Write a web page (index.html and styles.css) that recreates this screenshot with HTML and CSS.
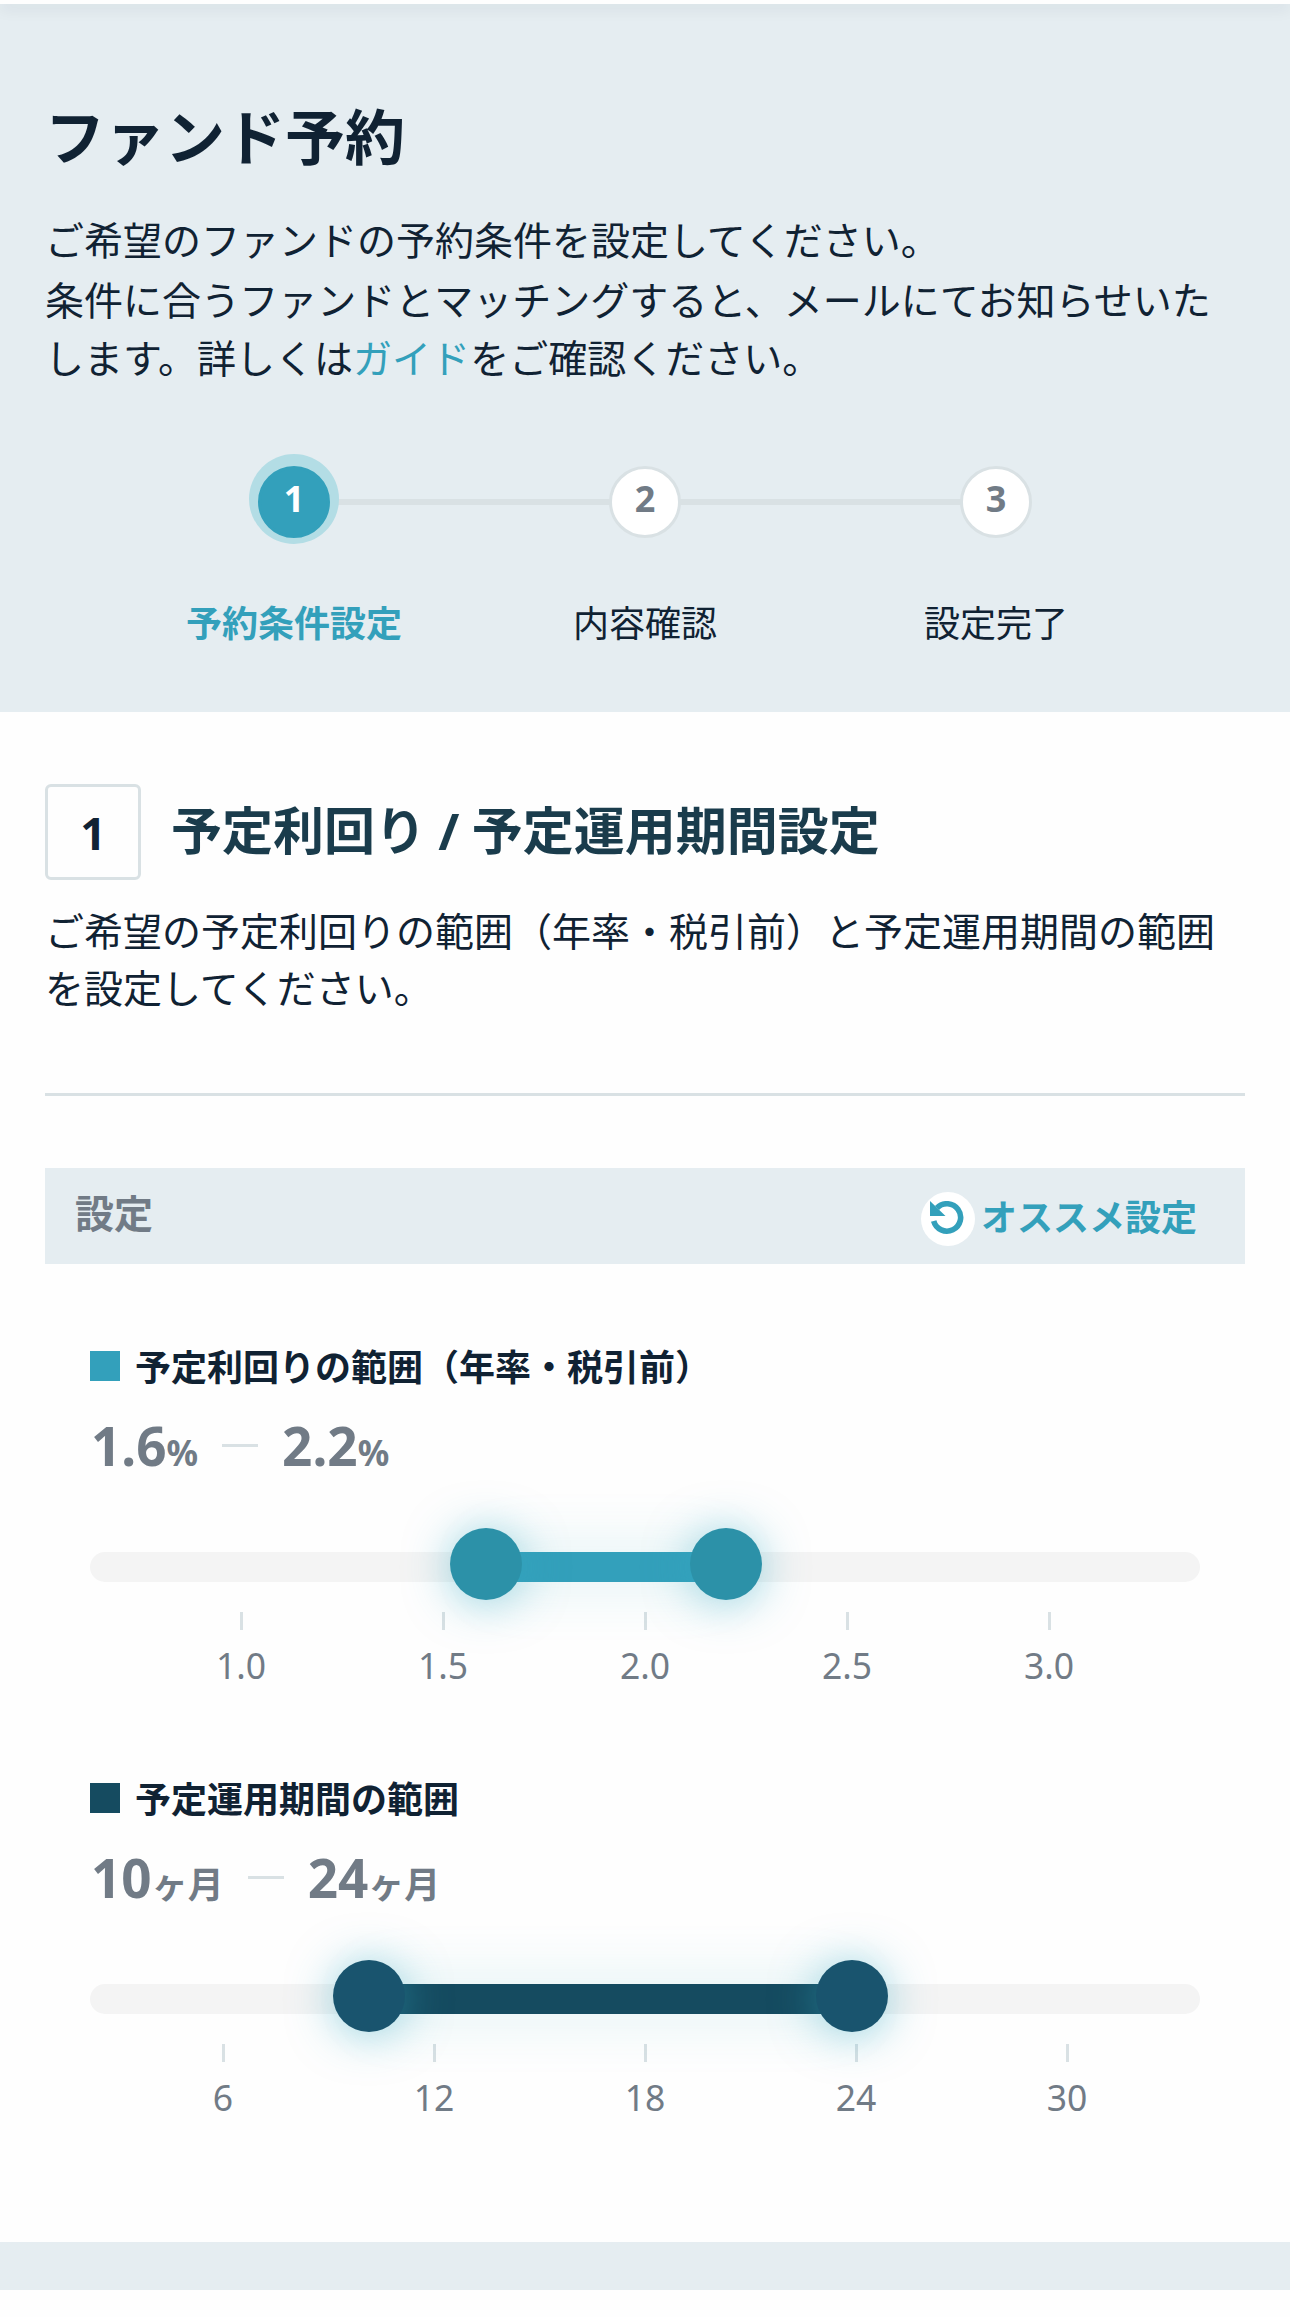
FILE: index.html
```html
<!DOCTYPE html>
<html lang="ja">
<head>
<meta charset="utf-8">
<title>ファンド予約</title>
<link rel="stylesheet" href="styles.css">
</head>
<body>
<div class="topbar"></div>
<header class="hero">
  <h1 class="hero-title">ファンド予約</h1>
  <div class="hero-lead">
    <p class="lead-first">ご希望のファンドの予約条件を設定してください。</p>
    <p class="lead-rest">条件に合うファンドとマッチングすると、メールにてお知らせいた<br>します。詳しくは<a class="link">ガイド</a>をご確認ください。</p>
  </div>
  <ol class="steps">
    <li class="step is-current"><span class="step-dot">1</span><span class="step-label">予約条件設定</span></li>
    <li class="step"><span class="step-dot">2</span><span class="step-label">内容確認</span></li>
    <li class="step"><span class="step-dot">3</span><span class="step-label">設定完了</span></li>
  </ol>
</header>
<main class="content">
  <div class="section-head">
    <span class="section-number">1</span>
    <h2 class="section-title">予定利回り / 予定運用期間設定</h2>
  </div>
  <p class="section-text">ご希望の予定利回りの範囲（年率・税引前）と予定運用期間の範囲を設定してください。</p>
  <div class="panel-bar">
    <span class="panel-title">設定</span>
    <a class="reset">
      <span class="reset-icon">
        <svg width="36" height="36" viewBox="0 0 36 36"><path class="ring" d="M7 7A13.7 13.7 0 1 1 3.7 20"/><path class="head" d="M0 0L15.5 15H0Z"/></svg>
      </span>
      <span class="reset-label">オススメ設定</span>
    </a>
  </div>

  <section class="range range-yield">
    <h3 class="range-title">予定利回りの範囲（年率・税引前）</h3>
    <div class="range-value"><span class="num">1.6</span><span class="unit">%</span><i class="dash"></i><span class="num">2.2</span><span class="unit">%</span></div>
    <div class="track">
      <div class="fill" style="margin-left:35.6%;width:21.7%"></div>
      <span class="knob" style="left:35.65%"></span>
      <span class="knob" style="left:57.3%"></span>
    </div>
    <ul class="scale"><li>1.0</li><li>1.5</li><li>2.0</li><li>2.5</li><li>3.0</li></ul>
  </section>

  <section class="range range-term">
    <h3 class="range-title">予定運用期間の範囲</h3>
    <div class="range-value"><span class="num">10</span><span class="unit">ヶ月</span><i class="dash"></i><span class="num">24</span><span class="unit">ヶ月</span></div>
    <div class="track">
      <div class="fill" style="margin-left:25.1%;width:43.5%"></div>
      <span class="knob" style="left:25.14%"></span>
      <span class="knob" style="left:68.65%"></span>
    </div>
    <ul class="scale"><li>6</li><li>12</li><li>18</li><li>24</li><li>30</li></ul>
  </section>
</main>
<div class="divider-band"></div>
</body>
</html>
```

FILE: styles.css
```css
* { box-sizing: border-box; margin: 0; padding: 0; }
body {
  width: 1290px;
  height: 2317px;
  overflow: hidden;
  background: #fefefe;
  color: #102233;
  font-family: "Noto Sans", "Noto Sans CJK JP", sans-serif;
  font-size: 39px;
}
ol, ul { list-style: none; }

.topbar {
  position: relative;
  height: 4px;
  background: #fefefe;
  box-shadow: 0 3px 15px rgba(16, 34, 51, .16);
}

.hero { height: 708px; padding: 88px 45px 0; background: #e5edf1; }
.hero-title { font-size: 60px; line-height: 90px; font-weight: 700; }
.hero-lead { padding-top: 28px; }
.lead-first { line-height: 60px; }
.lead-rest { padding-top: 1px; line-height: 58px; }
.link { color: #33a0bb; }

.steps { display: flex; width: 1053px; margin: 79px auto 0; }
.step {
  position: relative;
  flex: 1;
  display: flex;
  flex-direction: column;
  align-items: center;
}
.step + .step::before {
  content: "";
  position: absolute;
  top: 33px;
  left: -50%;
  width: 100%;
  height: 6px;
  background: #d9e1e4;
}
.step-dot {
  position: relative;
  z-index: 1;
  width: 72px;
  height: 72px;
  border: 3px solid #d9e1e4;
  border-radius: 50%;
  background: #fff;
  color: #717b86;
  font-size: 36px;
  font-weight: 700;
  line-height: 60px;
  text-align: center;
}
.is-current .step-dot {
  border-color: #33a0bb;
  background: #33a0bb;
  color: #fff;
  box-shadow: 0 -3px 0 9px #b3dde5;
}
.step-label { margin-top: 59px; font-size: 36px; line-height: 54px; }
.is-current .step-label { color: #33a0bb; font-weight: 700; }

.content { height: 1530px; padding: 72px 45px 0; }
.section-head { display: flex; align-items: center; gap: 30px; }
.section-number {
  width: 96px;
  height: 96px;
  border: 3px solid #d9e1e4;
  border-radius: 6px;
  font-size: 45px;
  font-weight: 700;
  line-height: 92px;
  text-align: center;
}
.section-title { margin-bottom: 4px; color: #1a3c4c; font-size: 51px; line-height: 76px; font-weight: 700; word-spacing: -1px; }
.section-text {
  height: 216px;
  padding-top: 22px;
  border-bottom: 3px solid #d9e1e4;
  line-height: 57px;
}

.panel-bar {
  display: flex;
  justify-content: space-between;
  height: 96px;
  margin-top: 72px;
  padding: 0 48px 0 30px;
  background: #e5edf1;
}
.panel-title { color: #717b86; font-weight: 700; line-height: 90px; }
.reset { display: flex; align-items: center; gap: 6px; color: #33a0bb; }
.reset-icon {
  display: flex;
  align-items: center;
  justify-content: center;
  width: 54px;
  height: 54px;
  margin-top: 6px;
  border-radius: 50%;
  background: #fff;
}
.ring { fill: none; stroke: currentColor; stroke-width: 5.6; }
.head { fill: currentColor; }
.reset-label { margin-top: 3px; font-size: 36px; font-weight: 700; line-height: 54px; }

.range { height: 432px; padding: 0 45px; }
.range-yield { margin-top: 75px; }
.range-title {
  display: flex;
  align-items: center;
  gap: 15px;
  height: 54px;
  padding-top: 4px;
  font-size: 36px;
  line-height: 50px;
  font-weight: 700;
}
.range-title::before { content: ""; width: 30px; height: 30px; margin-top: -4px; background: #33a0bb; }
.range-value {
  display: flex;
  align-items: baseline;
  height: 81px;
  margin-top: 15px;
  padding-left: 1px;
  color: #717b86;
  font-weight: 700;
  line-height: 75px;
}
.num { font-size: 53px; }
.unit { font-size: 35px; }
.dash { align-self: flex-start; width: 36px; height: 3px; margin: 36px 24px 0; background: #d9e1e4; }

.track {
  position: relative;
  height: 30px;
  margin-top: 63px;
  border-radius: 15px;
  background: #f4f4f4;
}
.fill { height: 30px; background: #33a0bb; box-shadow: 0 0 60px rgba(51, 170, 187, .2); }
.knob {
  position: absolute;
  top: -24px;
  width: 72px;
  height: 72px;
  margin-left: -36px;
  border-radius: 50%;
  background: #2c91a8;
  box-shadow: 0 3px 45px rgba(51, 170, 195, .5);
}
.scale {
  display: flex;
  justify-content: space-between;
  margin-top: 30px;
  padding: 0 101px;
  color: #717b86;
  font-size: 35.5px;
  line-height: 54px;
}
.scale li { display: flex; flex-direction: column; align-items: center; width: 100px; }
.scale li::before { content: ""; width: 3px; height: 18px; margin-bottom: 8px; background: #d9e1e4; }

.range-term .range-title::before { background: #154b60; }
.range-term .fill { background: #154b60; }
.range-term .knob { background: #19546e; }
.range-term .unit { font-size: 36px; }
.range-term .scale { padding: 0 83px; }

.divider-band { height: 48px; background: #e5edf1; }
```
